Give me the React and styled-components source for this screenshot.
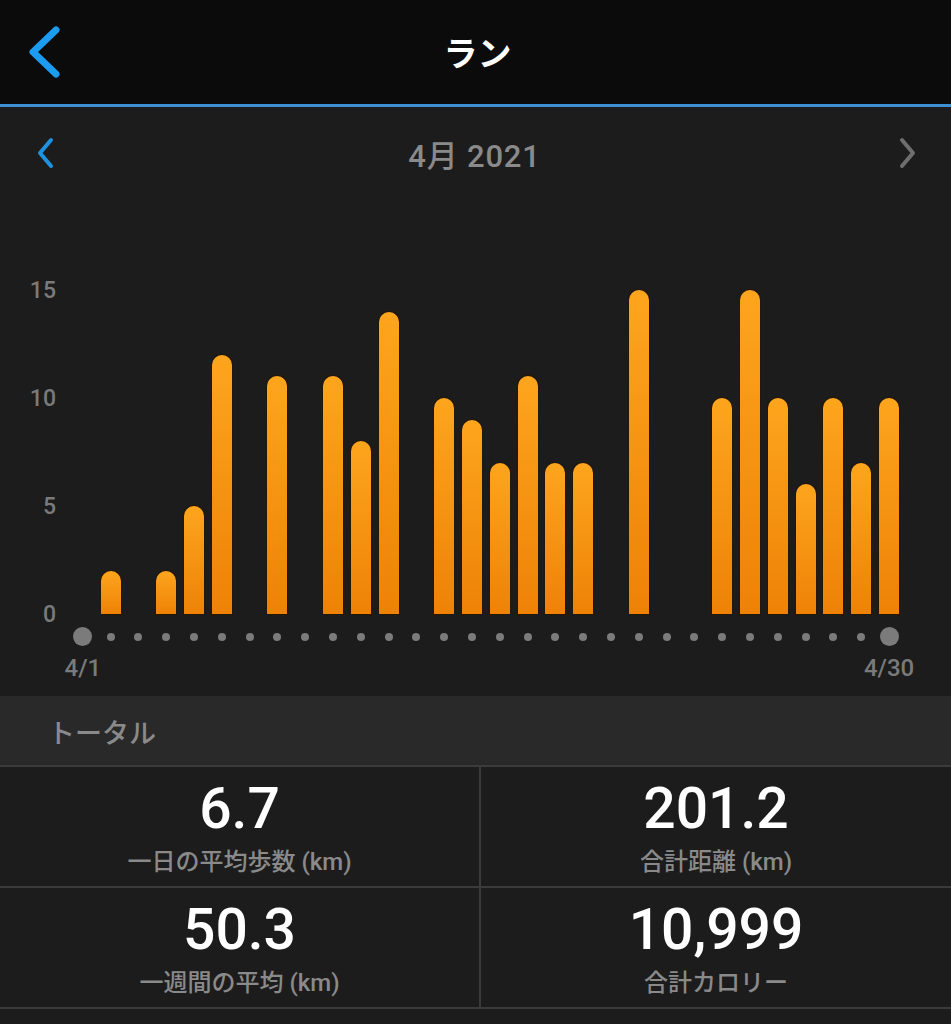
import React from 'react';
import styled, { createGlobalStyle } from 'styled-components';

const GlobalStyle = createGlobalStyle`
  body {
    margin: 0;
    background: #1c1c1c;
    font-family: Roboto, "Noto Sans CJK JP", sans-serif;
  }
`;

// km per day, 4/1 .. 4/30
const runs = [0, 2, 0, 2, 5, 12, 0, 11, 0, 11, 8, 14, 0, 10, 9, 7, 11, 7, 7, 0, 15, 0, 0, 10, 15, 10, 6, 10, 7, 10];
const PX_PER_KM = 21.6;

const stats = [
  { value: '6.7', label: '一日の平均歩数 (km)' },
  { value: '201.2', label: '合計距離 (km)' },
  { value: '50.3', label: '一週間の平均 (km)' },
  { value: '10,999', label: '合計カロリー' },
];

const App = () => {
  return (
    <>
      <GlobalStyle />
      <Page>
        <Header>
          <BackButton>
            <svg width="40" height="60" viewBox="0 0 40 60">
              <path d="M32 8 L9 30 L32 52" fill="none" stroke="#1c9cf0" strokeWidth="7" strokeLinecap="round" strokeLinejoin="round" />
            </svg>
          </BackButton>
          <Title>ラン</Title>
          <span />
        </Header>

        <MonthBar>
          <svg width="24" height="36" viewBox="0 0 24 36">
            <path d="M18 5 L7 18 L18 31" fill="none" stroke="#1f92df" strokeWidth="4" strokeLinecap="round" strokeLinejoin="round" />
          </svg>
          <MonthLabel>4月 2021</MonthLabel>
          <NextArrow>
            <svg width="24" height="36" viewBox="0 0 24 36">
              <path d="M6 5 L17 18 L6 31" fill="none" stroke="#6e6e6e" strokeWidth="4" strokeLinecap="round" strokeLinejoin="round" />
            </svg>
          </NextArrow>
        </MonthBar>

        <Chart>
          <ChartRow>
            <Axis>
              {[15, 10, 5, 0].map((n) => (
                <AxisLabel key={n}>{n}</AxisLabel>
              ))}
            </Axis>
            <Plot>
              {runs.map((km, i) => (
                <BarSlot key={i}>
                  {km > 0 && <Bar style={{ height: km * PX_PER_KM }} />}
                </BarSlot>
              ))}
            </Plot>
          </ChartRow>
          <Days>
            {runs.map((_, i) => (
              <Dot key={i} $big={i === 0 || i === runs.length - 1} />
            ))}
          </Days>
          <Days>
            {runs.map((_, i) => (
              <DayLabel key={i}>
                {i === 0 ? '4/1' : i === runs.length - 1 ? '4/30' : ''}
              </DayLabel>
            ))}
          </Days>
        </Chart>

        <SectionTitle>トータル</SectionTitle>

        <StatsGrid>
          {stats.map((s) => (
            <StatCell key={s.label}>
              <StatValue>{s.value}</StatValue>
              <StatLabel>{s.label}</StatLabel>
            </StatCell>
          ))}
        </StatsGrid>
      </Page>
    </>
  );
};

export default App;

const Page = styled.div`
  width: 951px;
  min-height: 1024px;
  background: #1c1c1c;
`;

// TOP NAV BAR
const Header = styled.header`
  height: 104px;
  background: #0b0b0b;
  border-bottom: 3px solid #3d8fd2;
  display: grid;
  grid-template-columns: 1fr auto 1fr;
  align-items: center;
`;

const BackButton = styled.div`
  display: flex;
  align-items: center;
  padding-left: 24px;
`;

const Title = styled.h1`
  margin: 0;
  color: #ffffff;
  font-family: "Noto Sans CJK JP", sans-serif;
  font-size: 34px;
  font-weight: 700;
  line-height: 1;
  padding-left: 4px;
`;

// MONTH SWITCHER
const MonthBar = styled.div`
  height: 92px;
  padding: 0 31px 0 33px;
  display: grid;
  grid-template-columns: 1fr auto 1fr;
  align-items: center;
`;

const MonthLabel = styled.div`
  color: #8a8a8a;
  font-size: 31px;
  font-weight: 500;
  letter-spacing: 0.8px;
  margin-left: -4px;
`;

const NextArrow = styled.div`
  display: flex;
  justify-content: flex-end;
`;

// CHART
const Chart = styled.section`
  padding: 91px 0 15px;
`;

const ChartRow = styled.div`
  display: flex;
  gap: 13px;
`;

const Axis = styled.div`
  width: 56px;
  height: 324px;
  display: flex;
  flex-direction: column;
  justify-content: space-between;
`;

const AxisLabel = styled.div`
  height: 0;
  display: flex;
  align-items: center;
  justify-content: flex-end;
  color: #7a7a7a;
  font-size: 23px;
  font-weight: 500;
`;

const Plot = styled.div`
  width: 834px;
  height: 324px;
  display: grid;
  grid-template-columns: repeat(30, minmax(0, 1fr));
`;

const BarSlot = styled.div`
  display: flex;
  justify-content: center;
  align-items: flex-end;
`;

const Bar = styled.div`
  width: 20px;
  border-radius: 10px 10px 0 0;
  background: linear-gradient(to bottom, #fda51d, #ee8207);
  box-shadow: 0 0 0 1px rgba(40, 20, 0, 0.7);
`;

const Days = styled.div`
  width: 834px;
  margin-left: 69px;
  display: grid;
  grid-template-columns: repeat(30, minmax(0, 1fr));
  height: 19px;
  align-items: center;
  margin-top: 13px;

  & + & {
    margin-top: 9px;
    height: 26px;
  }
`;

const Dot = styled.div`
  justify-self: center;
  width: ${(p) => (p.$big ? '19px' : '8px')};
  height: ${(p) => (p.$big ? '19px' : '8px')};
  border-radius: 50%;
  background: #7b7b7b;
`;

const DayLabel = styled.div`
  display: flex;
  justify-content: center;
  white-space: nowrap;
  color: #7a7a7a;
  font-size: 24px;
  font-weight: 500;
  line-height: 26px;
`;

// TOTALS
const SectionTitle = styled.div`
  height: 69px;
  box-sizing: border-box;
  padding: 20px 0 0 48px;
  background: #292929;
  color: #8a8a8a;
  font-family: "Noto Sans CJK JP", sans-serif;
  font-size: 27px;
  font-weight: 500;
  line-height: 32px;
`;

const StatsGrid = styled.div`
  display: grid;
  grid-template-columns: 479px 1fr;
  gap: 2px;
  background: #3b3b3b;
  border-top: 2px solid #3b3b3b;
  border-bottom: 2px solid #3b3b3b;
`;

const StatCell = styled.div`
  height: 119px;
  box-sizing: border-box;
  padding-top: 14px;
  background: #1c1c1c;
  display: flex;
  flex-direction: column;
  align-items: center;
`;

const StatValue = styled.div`
  color: #ffffff;
  font-size: 57px;
  font-weight: 500;
  line-height: 56px;
`;

const StatLabel = styled.div`
  margin-top: 10px;
  color: #8a8a8a;
  font-size: 24px;
  font-weight: 500;
  line-height: 30px;
`;
